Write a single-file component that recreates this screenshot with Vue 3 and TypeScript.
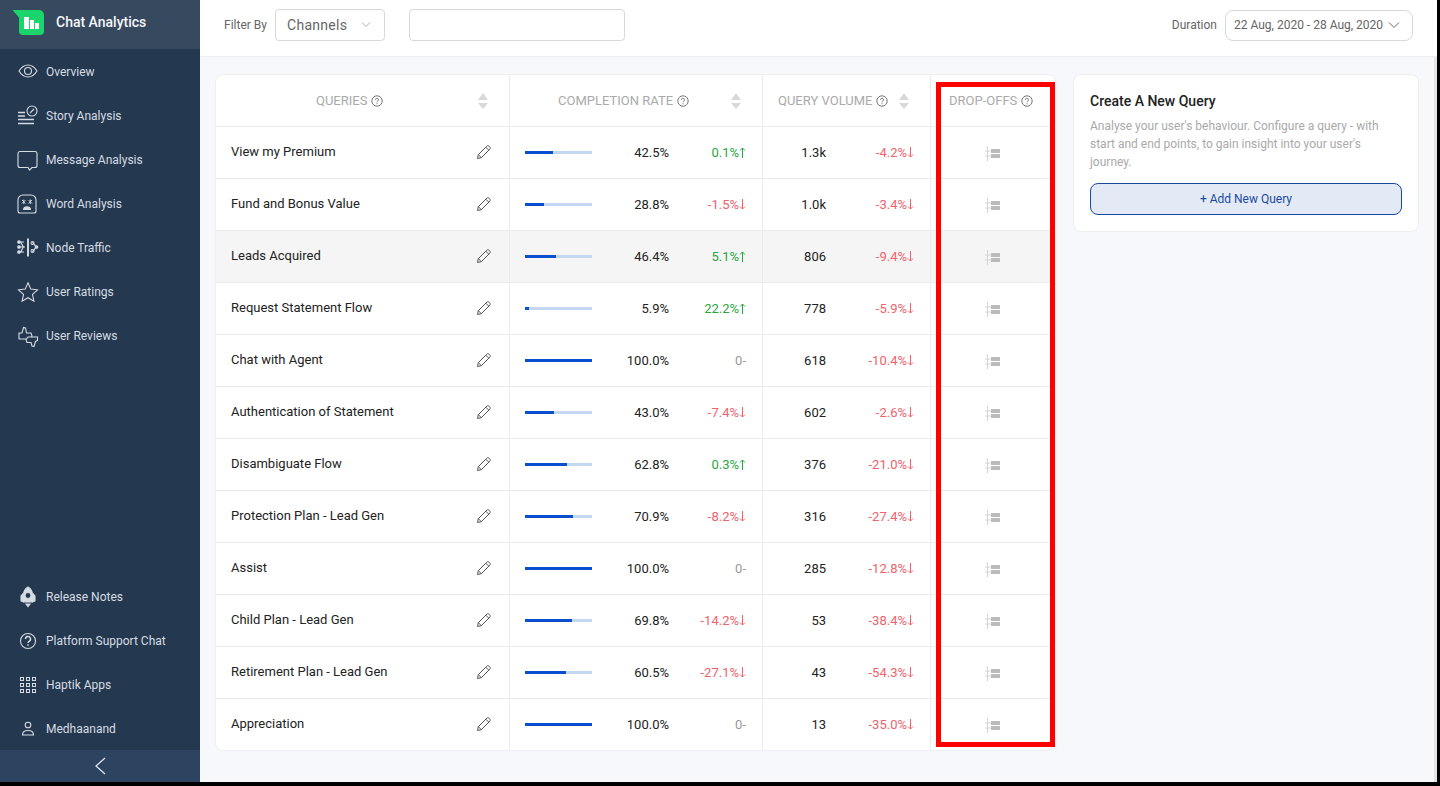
<script setup lang="ts">
interface Row {
  name: string;
  rate: number;
  rateDelta: string;
  volume: string;
  volumeDelta: string;
}

const navTop = ["Overview", "Story Analysis", "Message Analysis", "Word Analysis", "Node Traffic", "User Ratings", "User Reviews"];
const navBottom = ["Release Notes", "Platform Support Chat", "Haptik Apps", "Medhaanand"];

const rows: Row[] = [
  { name: "View my Premium", rate: 42.5, rateDelta: "0.1%", volume: "1.3k", volumeDelta: "-4.2%" },
  { name: "Fund and Bonus Value", rate: 28.8, rateDelta: "-1.5%", volume: "1.0k", volumeDelta: "-3.4%" },
  { name: "Leads Acquired", rate: 46.4, rateDelta: "5.1%", volume: "806", volumeDelta: "-9.4%" },
  { name: "Request Statement Flow", rate: 5.9, rateDelta: "22.2%", volume: "778", volumeDelta: "-5.9%" },
  { name: "Chat with Agent", rate: 100, rateDelta: "0", volume: "618", volumeDelta: "-10.4%" },
  { name: "Authentication of Statement", rate: 43, rateDelta: "-7.4%", volume: "602", volumeDelta: "-2.6%" },
  { name: "Disambiguate Flow", rate: 62.8, rateDelta: "0.3%", volume: "376", volumeDelta: "-21.0%" },
  { name: "Protection Plan - Lead Gen", rate: 70.9, rateDelta: "-8.2%", volume: "316", volumeDelta: "-27.4%" },
  { name: "Assist", rate: 100, rateDelta: "0", volume: "285", volumeDelta: "-12.8%" },
  { name: "Child Plan - Lead Gen", rate: 69.8, rateDelta: "-14.2%", volume: "53", volumeDelta: "-38.4%" },
  { name: "Retirement Plan - Lead Gen", rate: 60.5, rateDelta: "-27.1%", volume: "43", volumeDelta: "-54.3%" },
  { name: "Appreciation", rate: 100, rateDelta: "0", volume: "13", volumeDelta: "-35.0%" },
];

const heads = [
  { label: "QUERIES", sort: true },
  { label: "COMPLETION RATE", sort: true },
  { label: "QUERY VOLUME", sort: true },
  { label: "DROP-OFFS", sort: false },
];

const trend = (v: string) => (v === "0" ? "flat" : v.startsWith("-") ? "down" : "up");
</script>

<template>
  <div class="frame">
    <aside class="sidebar">
      <div class="brand">
        <svg class="logo" width="34" height="28" viewBox="0 0 34 28">
          <path d="M0.5 1H27a5 5 0 0 1 5 5v16a4 4 0 0 1-4 4H11a4 4 0 0 1-4-4V8.5Z" fill="#19d56c" />
          <rect x="12" y="8" width="5" height="12" fill="#fff" />
          <rect x="18" y="11" width="4" height="9" fill="#fff" />
          <rect x="23" y="14" width="4" height="6" fill="#fff" />
        </svg>
        <span>Chat Analytics</span>
      </div>

      <nav class="nav">
        <a v-for="(item, i) in navTop" :key="item" class="nav-item">
          <svg class="nav-icon" width="22" height="22" viewBox="0 0 22 22" fill="none" stroke="#d6dce3" stroke-width="1.1">
            <template v-if="i === 0">
              <path d="M2 10c2.500-4 5.500-6 9-6s6.500 2 9 6c-2.500 4-5.500 6-9 6s-6.500-2-9-6Z" />
              <circle cx="11" cy="10" r="3.500" />
            </template>
            <template v-else-if="i === 1">
              <path d="M1 7.500h7M1 11h7M1 14.500h16M1 18.500h16" stroke-width="1.400" />
              <circle cx="15" cy="6" r="5" />
              <path d="M13 8l4-4" />
            </template>
            <template v-else-if="i === 2">
              <path d="M3 2.500h15a2 2 0 0 1 2 2v12a2 2 0 0 1-2 2h-3l-2.500 2.500-1.500-2.500H3a2 2 0 0 1-2-2v-12a2 2 0 0 1 2-2Z" />
            </template>
            <template v-else-if="i === 3">
              <path d="M7 2h7a5 5 0 0 1 5 5v11a2 2 0 0 1-2 2H3a2 2 0 0 1-2-2V7a5 5 0 0 1 5-5Z" />
              <path d="M5 7l3.500 3.500M8.500 7L5 10.500M11.500 7l3.500 3.500M15 7l-3.500 3.500M6.750 6.500v4.500M13.250 6.500v4.500" stroke-width=".9" />
              <path d="M6.500 16.500c.5-3.500 6.500-3.500 7 0Z" fill="#d6dce3" />
            </template>
            <template v-else-if="i === 4">
              <path d="M11 1.500v18" stroke="#fff" stroke-width="1.600" />
              <path d="M1 5h6M1 10h7M1 15h6M3 5c2 0 2 5 4 5M3 15c2 0 2-5 4-5" stroke-width="1.200" />
              <circle cx="2" cy="5" r="1.300" fill="#d6dce3" /><circle cx="2" cy="10" r="1.300" fill="#d6dce3" /><circle cx="2" cy="15" r="1.300" fill="#d6dce3" />
              <path d="M15 5.500c2.500 0 2.500 4.500 5 4.500-2.500 0-2.500 4.500-5 4.500" stroke-width="1.200" />
              <circle cx="15.500" cy="6" r="1.500" /><circle cx="15.500" cy="14" r="1.500" /><circle cx="19.500" cy="10" r="1.300" fill="#d6dce3" />
            </template>
            <template v-else-if="i === 5">
              <path d="M11 1.800l2.800 6.300 6.700.7-5 4.600 1.400 6.800-5.900-3.500-5.900 3.500 1.400-6.800-5-4.600 6.700-.7Z" />
            </template>
            <template v-else>
              <path d="M2 8v6h11.500l1.500-3-1-3H9.500l-1-5-2-.5L5 8Z" />
              <path d="M20.500 15.500V12H11L9 14.500l1 3h4l1 3.500 2 .5 1.500-5Z" fill="#24384f" />
            </template>
          </svg>
          <span>{{ item }}</span>
        </a>
      </nav>

      <nav class="nav nav-bottom">
        <a v-for="(item, i) in navBottom" :key="item" class="nav-item">
          <svg class="nav-icon" width="22" height="22" viewBox="0 0 22 22" fill="none" stroke="#d6dce3" stroke-width="1.100">
            <template v-if="i === 0">
              <path d="M11 1c3.500 2 4.500 5 4.500 8v7h-9V9c0-3 1-6 4.500-8Z" fill="#d6dce3" />
              <circle cx="11" cy="9.500" r="3" fill="#24384f" />
              <path d="M6.500 7l-2.500 3v5l2.500 1M15.500 7l2.500 3v5l-2.500 1" fill="#d6dce3" />
              <path d="M9 18h4l-2 2.500Z" fill="#d6dce3" />
            </template>
            <template v-else-if="i === 1">
              <circle cx="11" cy="11" r="7.500" />
              <path d="M8.500 9a2.500 2.500 0 1 1 3.600 2.300c-.8.4-1.100.9-1.100 1.700" stroke-width="1.500" />
              <path d="M11 14.300v1.500" stroke-width="1.500" />
            </template>
            <template v-else-if="i === 2">
              <g stroke-width="1">
                <rect v-for="c in 9" :key="c" :x="3.500 + ((c - 1) % 3) * 6" :y="3.500 + Math.floor((c - 1) / 3) * 6" width="3" height="3" />
              </g>
            </template>
            <template v-else>
              <circle cx="11" cy="7" r="2.800" />
              <path d="M5.500 17c0-3.500 2-4.500 5.500-4.500s5.500 1 5.500 4.500Z" />
            </template>
          </svg>
          <span>{{ item }}</span>
        </a>
      </nav>

      <div class="collapse">
        <svg width="12" height="18" viewBox="0 0 12 18" fill="none" stroke="#e6eaef" stroke-width="1.200">
          <path d="M11 1L2 9l9 8" />
        </svg>
      </div>
    </aside>

    <div class="content">
      <header class="topbar">
        <label class="filter-label">Filter By</label>
        <div class="select">
          <span>Channels</span>
          <svg width="10" height="6" viewBox="0 0 10 6" fill="none" stroke="#aaa"><path d="M1 .5l4 4 4-4" /></svg>
        </div>
        <div class="search"></div>
        <label class="duration-label">Duration</label>
        <div class="duration">
          <span>22 Aug, 2020 - 28 Aug, 2020</span>
          <svg width="12" height="7" viewBox="0 0 12 7" fill="none" stroke="#666"><path d="M1 .5l5 5 5-5" /></svg>
        </div>
      </header>

      <main class="main">
        <section class="table">
          <div class="table-row table-head">
            <div v-for="h in heads" :key="h.label" class="head-cell">
              <span>{{ h.label }}</span>
              <svg class="help" width="12" height="12" viewBox="0 0 12 12" fill="none" stroke="#666">
                <circle cx="6" cy="6" r="5.200" stroke-width=".9" />
                <path d="M4.500 4.800a1.500 1.500 0 1 1 2.200 1.300c-.5.300-.7.500-.7 1.100" stroke-width=".9" />
                <path d="M6 8.200v1" stroke-width=".9" />
              </svg>
              <svg v-if="h.sort" class="sort" width="10" height="16" viewBox="0 0 10 16" fill="#d8d8d8">
                <path d="M5 0l5 7H0Z" />
                <path d="M0 10h10l-5 6Z" />
              </svg>
            </div>
          </div>

          <div v-for="(r, i) in rows" :key="r.name" class="table-row" :class="{ hovered: i === 2 }">
            <div class="cell name-cell">
              <span>{{ r.name }}</span>
              <svg width="16" height="16" viewBox="0 0 16 16" fill="none" stroke="#555" stroke-width="1">
                <path d="M1.500 14.500l.8-3.800 8.500-8.500c.7-.7 1.600-.7 2.200 0l.8.800c.6.600.6 1.500 0 2.200l-8.500 8.500Z" />
                <path d="M9.800 3.200l3 3M2.300 10.700l3 3" />
              </svg>
            </div>
            <div class="cell rate-cell">
              <div class="bar"><div class="bar-fill" :style="{ width: r.rate + '%' }"></div></div>
              <span class="value">{{ r.rate.toFixed(1) }}%</span>
              <span class="delta" :class="trend(r.rateDelta)">
                {{ r.rateDelta }}<template v-if="trend(r.rateDelta) === 'flat'">-</template>
                <svg v-else width="7" height="11" viewBox="0 0 7 11" fill="none" stroke="currentColor">
                  <path v-if="trend(r.rateDelta) === 'up'" d="M3.500 11V1M1 3.500L3.500 1 6 3.500" />
                  <path v-else d="M3.500 0v10M1 7.500L3.500 10 6 7.500" />
                </svg>
              </span>
            </div>
            <div class="cell volume-cell">
              <span class="value">{{ r.volume }}</span>
              <span class="delta" :class="trend(r.volumeDelta)">
                {{ r.volumeDelta }}
                <svg width="7" height="11" viewBox="0 0 7 11" fill="none" stroke="currentColor">
                  <path d="M3.500 0v10M1 7.500L3.500 10 6 7.500" />
                </svg>
              </span>
            </div>
            <div class="cell drop-cell">
              <svg width="16" height="15" viewBox="0 0 16 15">
                <path d="M2.500 0v15M0 5h6M0 10h6" stroke="#d4d4d4" fill="none" />
                <rect x="6" y="3" width="9" height="4" rx=".5" fill="#bbb" />
                <rect x="6" y="8" width="9" height="4" rx=".5" fill="#bbb" />
              </svg>
            </div>
          </div>

          <div class="highlight"></div>
        </section>

        <section class="create">
          <h3>Create A New Query</h3>
          <p>Analyse your user's behaviour. Configure a query - with start and end points, to gain insight into your user's journey.</p>
          <button>+ Add New Query</button>
        </section>
      </main>
    </div>
  </div>
</template>

<style>
html,
body {
  margin: 0;
  background: #000;
  overflow: hidden;
}
</style>

<style scoped>
.frame {
  display: flex;
  width: 1437px;
  height: 782px;
  font-family: Roboto, "Liberation Sans", sans-serif;
  color: #222;
}

.sidebar {
  width: 200px;
  flex: none;
  display: flex;
  flex-direction: column;
  background: #24384f;
}

.brand {
  height: 49px;
  flex: none;
  box-sizing: border-box;
  display: flex;
  align-items: center;
  padding: 0 0 4px 12px;
  background: #36495f;
  color: #f4f6f8;
  font-size: 14px;
  font-weight: 500;
}

.brand span {
  margin-bottom: 2px;
}

.logo {
  margin-right: 10px;
}

.nav {
  display: flex;
  flex-direction: column;
}

.nav-bottom {
  margin-top: auto;
}

.nav-item {
  height: 44px;
  box-sizing: border-box;
  padding: 2px 0 0 17px;
  display: flex;
  align-items: center;
  color: #d6dce3;
  font-size: 12px;
}

.nav-icon {
  margin-right: 7px;
  flex: none;
}

.collapse {
  height: 32px;
  flex: none;
  display: flex;
  align-items: center;
  justify-content: center;
  background: #2c4460;
}

.content {
  flex: 1;
  min-width: 0;
  display: flex;
  flex-direction: column;
}

.topbar {
  height: 57px;
  flex: none;
  box-sizing: border-box;
  display: flex;
  align-items: center;
  padding: 0 24px 6px 24px;
  background: #fff;
  border-bottom: 1px solid #eceef1;
  font-size: 12px;
  color: #666;
}

.filter-label {
  margin-right: 8px;
}

.select {
  width: 110px;
  height: 32px;
  box-sizing: border-box;
  display: flex;
  align-items: center;
  justify-content: space-between;
  padding: 0 13px 0 11px;
  border: 1px solid #d8d8d8;
  border-radius: 4px;
  font-size: 14px;
  letter-spacing: 0.3px;
}

.search {
  width: 216px;
  height: 32px;
  box-sizing: border-box;
  margin-left: 24px;
  border: 1px solid #d8d8d8;
  border-radius: 4px;
}

.duration-label {
  margin-left: auto;
  margin-right: 8px;
}

.duration {
  width: 188px;
  height: 31px;
  box-sizing: border-box;
  display: flex;
  align-items: center;
  justify-content: space-between;
  padding: 0 12px 0 8px;
  border: 1px solid #d8d8d8;
  border-radius: 8px;
}

.main {
  flex: 1;
  min-height: 0;
  display: flex;
  align-items: flex-start;
  gap: 17px;
  padding: 17px 15px 0;
  background: #f7f8fc;
  border-right: 3px solid #e5e5e5;
}

.table {
  position: relative;
  width: 841px;
  flex: none;
  box-sizing: border-box;
  background: #fff;
  border: 1px solid #eceef1;
  border-radius: 8px;
}

.table-row {
  display: grid;
  grid-template-columns: 294px 253px 168px 1fr;
  height: 52px;
  box-sizing: border-box;
  border-top: 1px solid #ececec;
  font-size: 13px;
}

.table-head {
  border-top: 0;
  height: 51px;
  color: #aaa;
}

.hovered {
  background: #f5f5f5;
}

.head-cell {
  display: flex;
  align-items: center;
  border-right: 1px solid #ececec;
}

.head-cell:last-child {
  border-right: 0;
}

.head-cell:nth-child(1) {
  padding-left: 100px;
}

.head-cell:nth-child(2) {
  padding-left: 48px;
}

.head-cell:nth-child(3) {
  padding-left: 15px;
}

.head-cell:nth-child(4) {
  padding-left: 18px;
}

.help {
  margin-left: 4px;
}

.sort {
  margin-left: auto;
  margin-right: 21px;
}

.cell {
  display: flex;
  align-items: center;
  border-right: 1px solid #ececec;
}

.cell:last-child {
  border-right: 0;
}

.name-cell {
  justify-content: space-between;
  padding: 0 17px 2px 15px;
}

.rate-cell {
  padding: 0 16px 0 15px;
}

.bar {
  width: 67px;
  height: 3px;
  flex: none;
  background: #c5d8f3;
}

.bar-fill {
  height: 100%;
  background: #0a4fcf;
}

.value {
  text-align: right;
}

.rate-cell .value {
  width: 77px;
  flex: none;
}

.volume-cell {
  padding: 0 16px 0 0;
}

.volume-cell .value {
  width: 63px;
  flex: none;
}

.delta {
  margin-left: auto;
  display: flex;
  align-items: center;
}

.up {
  color: #2aa63f;
}

.down {
  color: #f0626b;
}

.flat {
  color: #999;
}

.drop-cell {
  justify-content: center;
  padding-top: 2px;
}

.highlight {
  position: absolute;
  left: 720px;
  top: 7px;
  width: 119px;
  height: 665px;
  box-sizing: border-box;
  border: 5px solid #fe0000;
  pointer-events: none;
}

.create {
  width: 346px;
  flex: none;
  box-sizing: border-box;
  padding: 18px 16px 16px;
  background: #fff;
  border: 1px solid #eceef1;
  border-radius: 8px;
}

.create h3 {
  margin: 0 0 8px;
  font-size: 14px;
  font-weight: 500;
  line-height: 16px;
  color: #222;
}

.create p {
  margin: 0 0 12px;
  font-size: 12px;
  line-height: 18px;
  color: #aaa;
}

.create button {
  display: block;
  width: 100%;
  height: 32px;
  padding: 0;
  background: #e3eaf5;
  border: 1px solid #1a4aa0;
  border-radius: 8px;
  color: #1a4aa0;
  font-family: inherit;
  font-size: 12px;
}
</style>
